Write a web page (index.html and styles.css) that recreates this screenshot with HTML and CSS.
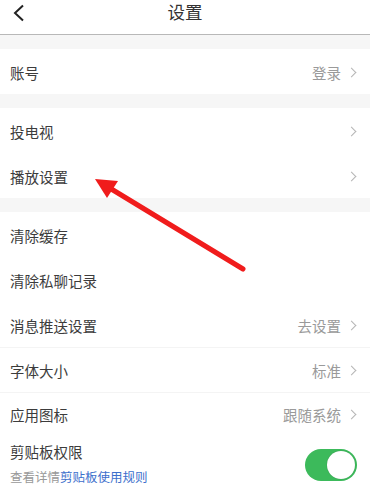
FILE: index.html
```html
<!DOCTYPE html>
<html lang="zh">
<head>
<meta charset="utf-8">
<link rel="stylesheet" href="styles.css">
</head>
<body>
<div class="page">
  <header class="topbar">
    <svg class="back" width="14" height="18" viewBox="0 0 14 18"><path d="M11 1.5 L3 9 L11 16.5" fill="none" stroke="#222" stroke-width="2"/></svg>
    <div class="title">设置</div>
  </header>
  <div class="band"></div>
  <div class="row"><span class="label">账号</span><span class="value">登录</span><span class="chev"></span></div>
  <div class="band"></div>
  <div class="row"><span class="label">投电视</span><span class="value"></span><span class="chev"></span></div>
  <div class="row"><span class="label">播放设置</span><span class="value"></span><span class="chev"></span></div>
  <div class="band"></div>
  <div class="row"><span class="label">清除缓存</span></div>
  <div class="row"><span class="label">清除私聊记录</span></div>
  <div class="row"><span class="label">消息推送设置</span><span class="value">去设置</span><span class="chev"></span></div>
  <div class="row line"><span class="label">字体大小</span><span class="value">标准</span><span class="chev"></span></div>
  <div class="row line short"><span class="label">应用图标</span><span class="value">跟随系统</span><span class="chev"></span></div>
  <div class="row tall">
    <div class="stack">
      <span class="label">剪贴板权限</span>
      <span class="sub">查看详情<span class="link">剪贴板使用规则</span></span>
    </div>
    <span class="toggle"><span class="knob"></span></span>
  </div>
  <svg class="arrow" width="370" height="493" viewBox="0 0 370 493">
    <line x1="243" y1="269" x2="108" y2="187" stroke="#f01c1c" stroke-width="5" stroke-linecap="round"/>
    <polygon points="95,179 118,181 107,198" fill="#f01c1c"/>
  </svg>
</div>
</body>
</html>
```
FILE: styles.css
```css
* { box-sizing: border-box; }
html, body { margin: 0; padding: 0; background: #fff; }
body { font-family: "Noto Sans CJK SC", "Noto Sans", sans-serif; color: #333; }
.page { position: relative; width: 370px; height: 493px; overflow: hidden; }
.topbar { height: 35px; border-bottom: 1px solid #b8b8b8; display: flex; align-items: center; justify-content: center; position: relative; }
.back { position: absolute; left: 12px; top: 4px; }
.title { font-size: 17.5px; color: #333; line-height: 1; margin-top: -11px; }
.band { height: 14px; background: #f6f6f6; }
.row { height: 45px; display: flex; align-items: center; padding: 1px 11px 0 10px; }
.row.line { border-top: 1px solid #f4f4f4; padding-top: 0; }
.row.short { height: 44px; }
.label { font-size: 14.5px; color: #3c3c3c; flex: 1; }
.value { font-size: 14.5px; color: #9a9a9a; margin-right: 7px; }
.chev { width: 7px; height: 7px; border-top: 1.2px solid #b5b5b5; border-right: 1.2px solid #b5b5b5; transform: rotate(45deg); margin-right: 4px; }
.row.tall { height: 61px; align-items: flex-start; padding-top: 5px; }
.stack { flex: 1; display: flex; flex-direction: column; gap: 5px; }
.sub { font-size: 12.5px; color: #999; }
.link { color: #3d6fcc; }
.toggle { width: 52px; height: 32px; border-radius: 16px; background: #3cba5b; margin-top: 8px; margin-right: 2px; position: relative; }
.knob { position: absolute; right: 2px; top: 2px; width: 28px; height: 28px; border-radius: 50%; background: #fff; box-shadow: 0 0 1px rgba(0,0,0,0.3); }
.arrow { position: absolute; left: 0; top: 0; pointer-events: none; }
```
